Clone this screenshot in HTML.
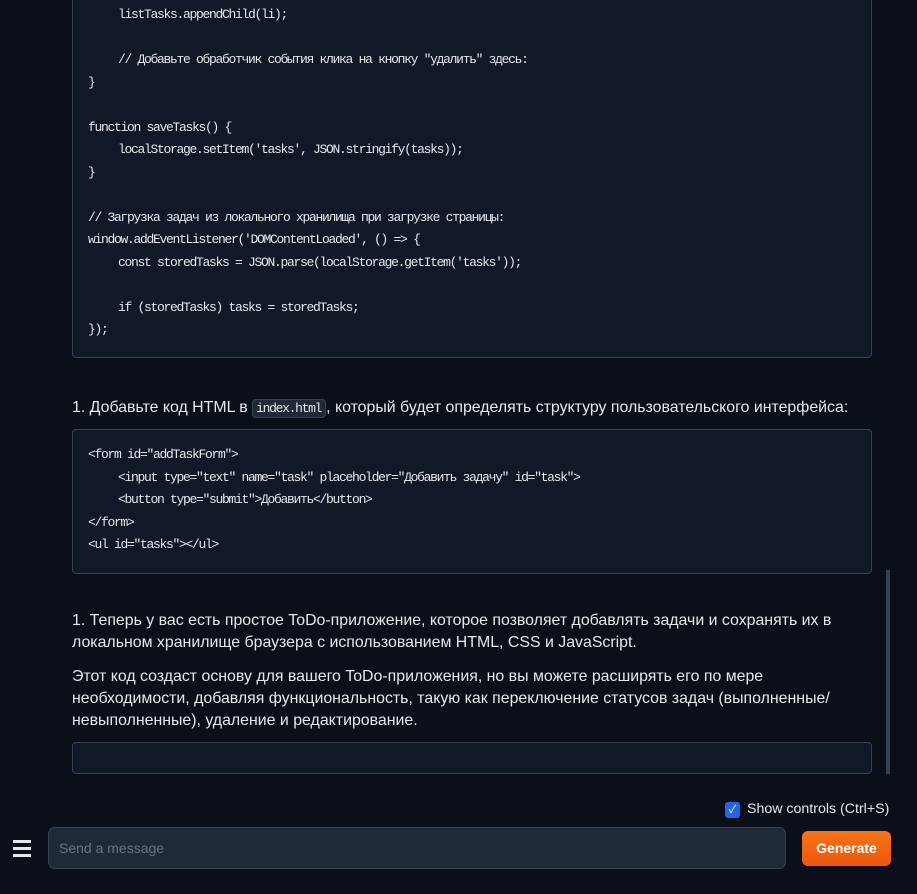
<!DOCTYPE html>
<html><head><meta charset="utf-8"><style>
*{box-sizing:border-box;margin:0;padding:0}
body{width:917px;height:894px;background:#0b0f19;color:#e5e7eb;font-family:"Liberation Sans","Noto Sans CJK SC",sans-serif;position:relative;overflow:hidden}
.code{position:absolute;left:72px;width:800px;background:#111827;border:1px solid #374151;border-radius:4px;font-family:"Liberation Mono",monospace;font-size:13px;letter-spacing:-1.3px;line-height:22.5px;color:#e5e7eb;padding-left:15px;white-space:pre}
.in{padding-left:4px}
.t{position:absolute;left:72px;font-size:15.9px;line-height:22px;color:#e5e7eb;width:790px}
.ic{font-family:"Liberation Mono",monospace;font-size:13px;letter-spacing:-1.3px;background:#1f2937;border:1px solid #374151;border-radius:4px;padding:1px 4px 1px 3px}
</style></head><body>
<div class="code" style="top:-20px;height:378px;padding-top:23px">    <span class="in">listTasks.appendChild(li);</span>

    <span class="in">// Добавьте обработчик события клика на кнопку "удалить" здесь:</span>
}

function saveTasks() {
    <span class="in">localStorage.setItem('tasks', JSON.stringify(tasks));</span>
}

// Загрузка задач из локального хранилища при загрузке страницы:
window.addEventListener('DOMContentLoaded', () =&gt; {
    <span class="in">const storedTasks = JSON.parse(localStorage.getItem('tasks'));</span>

    <span class="in">if (storedTasks) tasks = storedTasks;</span>
});</div>
<div class="t" style="top:397px;width:820px">1. Добавьте код HTML в <span class="ic">index.html</span>, который будет определять структуру пользовательского интерфейса:</div>
<div class="code" style="top:429px;height:145px;padding-top:14px">&lt;form id="addTaskForm"&gt;
    <span class="in">&lt;input type="text" name="task" placeholder="Добавить задачу" id="task"&gt;</span>
    <span class="in">&lt;button type="submit"&gt;Добавить&lt;/button&gt;</span>
&lt;/form&gt;
&lt;ul id="tasks"&gt;&lt;/ul&gt;</div>
<div class="t" style="top:610px">1. Теперь у вас есть простое ToDo-приложение, которое позволяет добавлять задачи и сохранять их в локальном хранилище браузера с использованием HTML, CSS и JavaScript.</div>
<div class="t" style="top:666px">Этот код создаст основу для вашего ToDo-приложения, но вы можете расширять его по мере необходимости, добавляя функциональность, такую как переключение статусов задач (выполненные/невыполненные), удаление и редактирование.</div>
<div style="position:absolute;left:72px;top:742px;width:800px;height:32px;background:#111827;border:1px solid #374151;border-radius:4px"></div>
<div style="position:absolute;left:886px;top:570px;width:4px;height:204px;background:#374151"></div>
<div style="position:absolute;left:725px;top:802px;width:15px;height:16px;background:#2563eb;border-radius:3px;color:#fff;font-size:11px;text-align:center;line-height:16px">✓</div>
<div style="position:absolute;left:747px;top:801px;font-size:14.2px;color:#e5e7eb">Show controls (Ctrl+S)</div>
<div style="position:absolute;left:13px;top:840px;width:18px">
<div style="height:3px;background:#e5e7eb;margin-bottom:4px"></div><div style="height:3px;background:#e5e7eb;margin-bottom:4px"></div><div style="height:3px;background:#e5e7eb"></div></div>
<div style="position:absolute;left:48px;top:827px;width:738px;height:42px;background:#1f2937;border:1px solid #374151;border-radius:7px;padding-left:10px;line-height:40px;font-size:14px;color:#6b7280">Send a message</div>
<div style="position:absolute;left:802px;top:831px;width:89px;height:35px;background:linear-gradient(#f97316,#ea580c);border-radius:6px;color:#fff;font-weight:bold;font-size:14px;text-align:center;line-height:35px">Generate</div>
</body></html>
